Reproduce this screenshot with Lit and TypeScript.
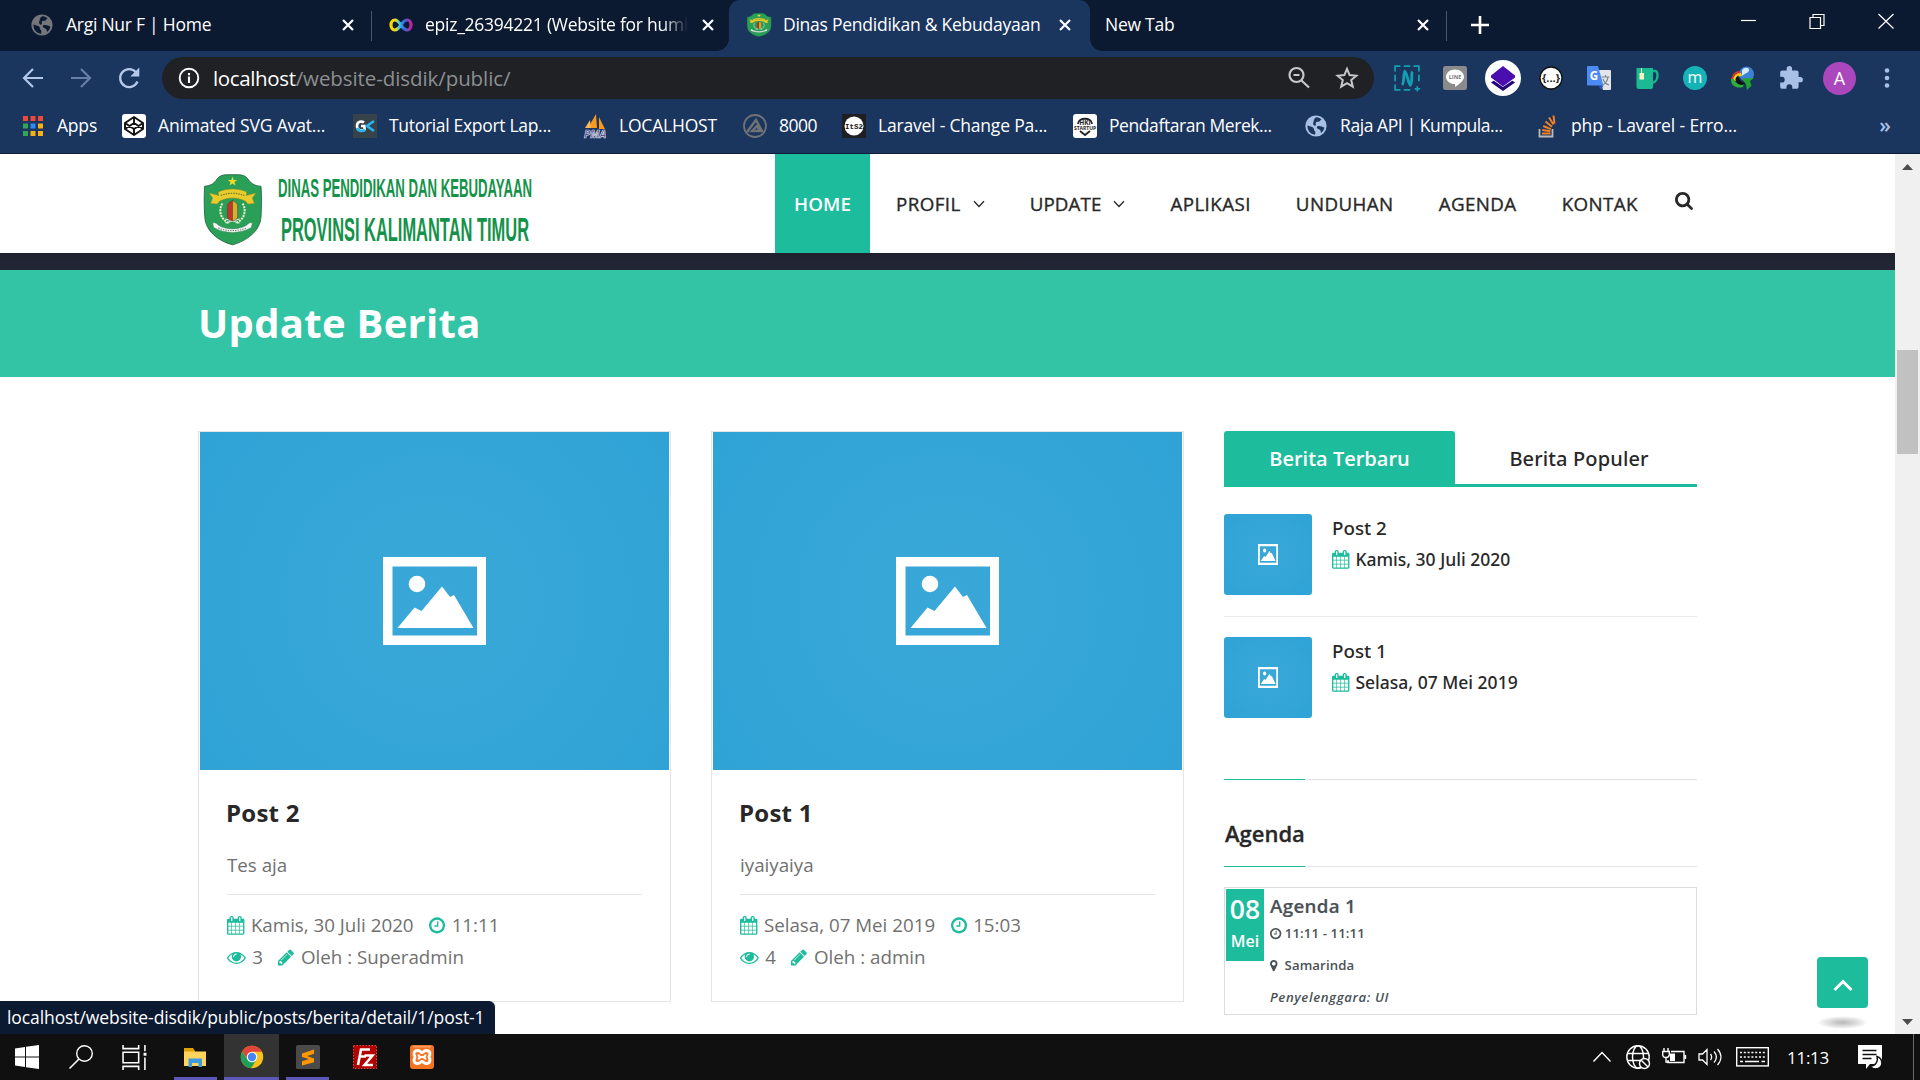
import { LitElement, html, svg, css } from "lit";
import { classMap } from "lit/directives/class-map.js";
import { styleMap } from "lit/directives/style-map.js";

/* ---------- Font Awesome style glyphs ---------- */
const fa: Record<string, { box: string; ratio: number; d: string }> = {
  calendar: { box: "64 0 1664 1792", ratio: 1664 / 1792, d: "M192 1664h288v-288h-288v288zm352 0h320v-288h-320v288zm-352-352h288v-320h-288v320zm352 0h320v-320h-320v320zm-352-384h288v-288h-288v288zm736 736h320v-288h-320v288zm-384-736h320v-288h-320v288zm768 736h288v-288h-288v288zm-384-352h320v-320h-320v320zm-352-864v-288q0-13-9.5-22.5t-22.5-9.5h-64q-13 0-22.5 9.5t-9.5 22.5v288q0 13 9.5 22.5t22.5 9.5h64q13 0 22.5-9.5t9.5-22.5zm736 864h288v-320h-288v320zm-384-384h320v-288h-320v288zm384 0h288v-288h-288v288zm32-480v-288q0-13-9.5-22.5t-22.5-9.5h-64q-13 0-22.5 9.5t-9.5 22.5v288q0 13 9.5 22.5t22.5 9.5h64q13 0 22.5-9.5t9.5-22.5zm384-64v1280q0 52-38 90t-90 38h-1408q-52 0-90-38t-38-90v-1280q0-52 38-90t90-38h128v-96q0-66 47-113t113-47h64q66 0 113 47t47 113v96h384v-96q0-66 47-113t113-47h64q66 0 113 47t47 113v96h128q52 0 90 38t38 90z" },
  clock: { box: "128 0 1536 1792", ratio: 1536 / 1792, d: "M1024 544v448q0 14-9 23t-23 9h-320q-14 0-23-9t-9-23v-64q0-14 9-23t23-9h224v-352q0-14 9-23t23-9h64q14 0 23 9t9 23zm416 352q0-148-73-273t-198-198-273-73-273 73-198 198-73 273 73 273 198 198 273 73 273-73 198-198 73-273zm224 0q0 209-103 385.5t-279.5 279.5-385.5 103-385.5-103-279.5-279.5-103-385.5 103-385.5 279.5-279.5 385.5-103 385.5 103 279.5 279.5 103 385.5z" },
  eye: { box: "0 0 1792 1792", ratio: 1, d: "M1664 960q-152-236-381-353 61 104 61 225 0 185-131.5 316.5t-316.5 131.5-316.5-131.5-131.5-316.5q0-121 61-225-229 117-381 353 133 205 333.5 326.5t434.5 121.5 434.5-121.5 333.5-326.5zm-720-384q0-20-14-34t-34-14q-125 0-214.5 89.5t-89.5 214.5q0 20 14 34t34 14 34-14 14-34q0-86 61-147t147-61q20 0 34-14t14-34zm848 384q0 34-20 69-140 230-376.5 368.5t-499.5 138.5-499.5-139-376.5-368q-20-35-20-69t20-69q140-229 376.5-368t499.5-139 499.5 139 376.5 368q20 35 20 69z" },
  pencil: { box: "128 0 1536 1792", ratio: 1536 / 1792, d: "M491 1536l91-91-235-235-91 91v107h128v128h107zm523-928q0-22-22-22-10 0-17 7l-542 542q-7 7-7 17 0 22 22 22 10 0 17-7l542-542q7-7 7-17zm-54-192l416 416-832 832h-416v-416zm683 96q0 53-37 90l-166 166-416-416 166-165q36-38 90-38 53 0 91 38l235 234q37 39 37 91z" },
  marker: { box: "384 0 1024 1792", ratio: 1024 / 1792, d: "M1152 640q0-106-75-181t-181-75-181 75-75 181 75 181 181 75 181-75 75-181zm256 0q0 109-33 179l-364 774q-16 33-47.5 52t-67.5 19-67.5-19-46.5-52l-365-774q-33-70-33-179 0-212 150-362t362-150 362 150 150 362z" },
  search: { box: "64 128 1664 1664", ratio: 1, d: "M1216 832q0-185-131.5-316.5t-316.5-131.5-316.5 131.5-131.5 316.5 131.5 316.5 316.5 131.5 316.5-131.5 131.5-316.5zm512 832q0 52-38 90t-90 38q-54 0-90-38l-343-342q-179 124-399 124-143 0-273.5-55.5t-225-150-150-225-55.5-273.5 55.5-273.5 150-225 225-150 273.5-55.5 273.5 55.5 225 150 150 225 55.5 273.5q0 220-124 399l343 343q37 37 37 90z" },
};
const faIcon = (name: string) => html`<svg class="fa" viewBox=${fa[name].box} style=${styleMap({ width: `${fa[name].ratio}em` })}><path fill="currentColor" d=${fa[name].d}></path></svg>`;

const icon = (size: number, body: unknown, box = 24) => html`<svg class="ico" width=${size} height=${size} viewBox="0 0 ${box} ${box}">${body}</svg>`;

/* ---------- Browser glyphs ---------- */
const globe = (color: string) => svg`
  <circle cx="12" cy="12" r="10.6" fill=${color}></circle>
  <path fill="var(--globe-cut)" d="M3.6 11.2c1.500 1.400 4 1 5.400 2.200 1.600 1.200.4 2.600 1.800 3.700 1 .8.500 2.900.200 3.600-5-.6-8.100-5-7.400-9.500zM12.500 3.200c2.300.3 3.900 1 5.200 2.400-1.500.2-1.200 1.600-2.400 2-1.300.4-2.300-.2-3.300.8-.8.9.4 2-.2 2.900-.8.8-2.300.2-2.600-1-.5-1.500.6-2.100.5-3.600 0-1.200 1.200-1.700 1-2.500zM13 12.600c1.600-1 3.500-.4 5.400.2 1.100.3 1.400.9 2 1-.5 2-1.700 4-3.400 5.200-.5-1.200 0-2.300-1-3-1.300-.9-3.700-1.300-3-3.400z"></path>`;

const crest = svg`
  <path fill="#2a9f57" stroke="#1d5f3d" stroke-width=".8" d="M22 .7h12c4 0 7 1.500 9 4 2.500 4 6 7.300 13 7.500.8 10 .6 20 0 31C55 57 42 67 28 70.800 14 67 1.500 57 .8 43.200 0 32 0 22 .6 12.200 7 12 10.500 8.700 13 4.700c2-2.500 5-4 9-4z"></path>
  <path fill="#f3dc2a" d="M28 2.800l1.200 3.200h3.400l-2.700 2.100 1 3.300-2.900-2-2.900 2 1-3.300L23.400 6h3.400z"></path>
  <path fill="#e8cc2e" stroke="#8c8b22" stroke-width=".5" d="M14 18c8-4 20-4 28 0l-.5 3.500L51 19l-3.500 5 2 5.500-6.500.5-2.500-3c-8-4-17-4-25 0L13 30l-6.500-.5 2-5.500L5 19l9.500 2.500z"></path>
  <path d="M16.500 21.500c7.500-3 15.500-3 23 0" stroke="#6d7a2a" stroke-width="1.200" stroke-dasharray="1.500 1" fill="none"></path>
  <path d="M18 29.500c-4 7-2 16 7 20M38 29.500c4 7 2 16-7 20" stroke="#eef2c8" stroke-width="2" stroke-dasharray="2 1" fill="none"></path>
  <path d="M21 49l14-4M35 49l-14-4" stroke="#e8efe6" stroke-width="1"></path>
  <path fill="#c2342d" stroke="#5b3a1c" stroke-width=".5" d="M28 26.500c-2.500 1-5 3-5 5V43c0 2 3 3.500 5 4z"></path>
  <path fill="#d9b02e" stroke="#5b3a1c" stroke-width=".5" d="M28 26.500c2.500 1 5 3 5 5V43c0 2-3 3.500-5 4z"></path>
  <path fill="#f5f7f4" stroke="#56806a" stroke-width=".5" d="M8.500 49c2.500-1 4 .5 6 2.500 8 4.500 19 4.500 27 0 2-2 3.500-3.500 6-2.500l-1 4.500c-11 6.500-26 6.500-37 0z"></path>
  <path d="M14 54c9 3.500 19 3.500 28 0" stroke="#6d8a79" stroke-width="1" stroke-dasharray="1.400 1" fill="none"></path>`;

const close = icon(14, svg`<path d="M2 2l10 10M12 2L2 12" stroke="#fff" stroke-width="2.200"></path>`, 14);

/* ---------- Data ---------- */
const tabs = [
  { cls: "t1", title: "Argi Nur F | Home", glyph: icon(24, globe("#73767b")) },
  { cls: "t2", title: "epiz_26394221 (Website for humb", glyph: icon(24, svg`<defs><linearGradient id="inf"><stop offset="0" stop-color="#ffd400"></stop><stop offset=".25" stop-color="#e8dc20"></stop><stop offset=".42" stop-color="#3fc1e8"></stop><stop offset=".65" stop-color="#2d6fe0"></stop><stop offset="1" stop-color="#c3229b"></stop></linearGradient></defs><path fill="none" stroke="url(#inf)" stroke-width="3.200" d="M12 12c-2.300-3.400-4-5-6.200-5C3.600 7 2 9.200 2 12s1.600 5 3.800 5c2.200 0 3.900-1.600 6.200-5s4-5 6.200-5C20.400 7 22 9.200 22 12s-1.600 5-3.800 5c-2.200 0-3.900-1.600-6.200-5z"></path>`) },
  { cls: "t3", title: "Dinas Pendidikan & Kebudayaan", glyph: html`<svg class="ico" width="24" height="24" viewBox="0 0 56 72" preserveAspectRatio="none">${crest}</svg>` },
  { cls: "t4", title: "New Tab", glyph: null },
];

const extensions = [
  icon(26, svg`<g fill="none" stroke="#11a0b2"><path stroke-width="1.600" d="M1 6V1h5M9 1h6M18 1h5v5M23 9v6M1 9v6M1 18v5h5M9 23h6M19 22h5M21.500 19.500v5"></path><path stroke-width="2.600" d="M7.500 18.500c2-2 1-10 2.500-12.500 2.500 2 2.500 10 5 12.500C17.500 16 15.500 8 17 6"></path></g>`),
  icon(24, svg`<rect width="24" height="24" rx="2.500" fill="#8b8b8b"></rect><path fill="#fff" d="M12 3.500c5 0 9 3.200 9 7.200 0 3.200-3.500 6.800-9 10.300.3-1.600.5-2.600-.4-2.900C6.800 17.700 3 14.700 3 10.700c0-4 4-7.200 9-7.200z"></path><text x="12" y="13" font-size="5.500" font-weight="700" text-anchor="middle" fill="#777">LINE</text>`),
  icon(36, svg`<circle cx="18" cy="18" r="18" fill="#fff"></circle><path fill="#22067a" d="M6 22.500L18 14l12 8.500L18 31z"></path><path fill="#fff" d="M4 17.500h28L18 27z"></path><path fill="#4a0db0" d="M6 15.500L18 6l12 9.500v2L18 26.500 6 17.500z"></path>`, 36),
  icon(24, svg`<circle cx="12" cy="12" r="11" fill="#fff" stroke="#111" stroke-width="1.300"></circle><text x="12" y="16" font-size="11" font-weight="700" text-anchor="middle" fill="#222">{...}</text>`),
  icon(24, svg`<path fill="#e3e5e8" d="M10 4h13a1 1 0 0 1 1 1v18a1 1 0 0 1-1 1h-7z"></path><path fill="#4c8bf5" d="M1 0h10l5.500 19.500H1a1 1 0 0 1-1-1V1a1 1 0 0 1 1-1z"></path><path fill="#2e57b8" d="M11.500 19.500h5L14 24z"></path><text x="7" y="14" font-size="11.500" font-weight="700" text-anchor="middle" fill="#fff">G</text><path d="M14.500 11h8M18.500 9v2M15.500 19c3-1.500 5-4 5.500-8M16 13c1 3 3 5 6 6" stroke="#7b8790" stroke-width="1.200" fill="none"></path>`),
  icon(24, svg`<path fill="none" stroke="#17b58c" stroke-width="2.400" d="M17 5h3c2 0 2.500 1.500 2.500 4.500S21 16.500 17 17"></path><path fill="#1cba92" d="M1.500 2H18v19a2 2 0 0 1-2 2H4a2.500 2.500 0 0 1-2.500-2.500z"></path><path d="M6.500 2v6" stroke="#e9f6a6" stroke-width="1"></path><rect x="4.500" y="7" width="4.500" height="6.500" fill="#f4f7c4"></rect>`),
  icon(24, svg`<circle cx="12" cy="12" r="12" fill="#15b3b6"></circle><text x="12" y="17" font-size="16" text-anchor="middle" fill="#fff">m</text>`),
  icon(24, svg`<circle cx="15.500" cy="8" r="7.500" fill="#3d82d6"></circle><path fill="#d8e9f7" d="M11 5c1-4 7-4 7-1s-4 3-7 6z"></path><path fill="#d5382a" d="M0 14c1-6 4-9 9-9l1 3c-4 0-6 3-6 7z"></path><path fill="#f2d21b" d="M2 14c1-4 3-7 8-7l1 3c-4 0-5 2-4 6z"></path><path fill="#2fae3c" d="M0 13c-.5 7 6 10 12 8l1-3c-5 1-9-1-10-5z"></path><path fill="#111" d="M4.500 14c0-2 1-4 3-4.500 0 5 3 7 7 8-4 3-9 1-10-3.500z"></path><path fill="#1fa52c" d="M11 12.500l12-.5-4 3 1.500 4.500-4.500 4.500-1-5.500z"></path>`),
  icon(26, svg`<path fill="#a9c0e6" d="M20.500 11H19V7a2 2 0 0 0-2-2h-4V3.500a2.500 2.500 0 0 0-5 0V5H4a2 2 0 0 0-2 2v3.800h1.500a2.700 2.700 0 0 1 0 5.400H2V20a2 2 0 0 0 2 2h3.800v-1.500a2.700 2.700 0 0 1 5.400 0V22H17a2 2 0 0 0 2-2v-4h1.500a2.500 2.500 0 0 0 0-5z"></path>`),
];

const bookmarks = [
  { w: 101, t: "Apps", ls: -0.2, g: icon(24, svg`${[0, 1, 2].map((r) => [0, 1, 2].map((c) => svg`<rect x=${2 + c * 7.5} y=${2 + r * 7.5} width="5" height="5" fill=${[["#ee4a3c", "#ee4a3c", "#ee4a3c"], ["#32a457", "#2c8af5", "#f8b015"], ["#32a457", "#f8b015", "#f8b015"]][r][c]}></rect>`))}`) },
  { w: 231, t: "Animated SVG Avat...", ls: -0.16, g: icon(24, svg`<rect width="24" height="24" rx="3" fill="#fff"></rect><path fill="none" stroke="#111" stroke-width="1.900" stroke-linejoin="round" d="M12 3l9 6v6l-9 6-9-6V9zM12 3v6M12 15v6M3 9l9 6 9-6M3 15l9-6 9 6"></path>`) },
  { w: 230, t: "Tutorial Export Lap...", ls: -0.31, g: icon(24, svg`<rect width="24" height="24" fill="#37434a"></rect><path fill="none" stroke="#fff" stroke-width="2.600" d="M11 8.500C9 7 4 7 4 12s5 5 7.500 3.500V12H8"></path><path fill="none" stroke="#28b4ee" stroke-width="2.600" d="M21 7l-7 5 7 5M4 14c1 3 5 3.500 8 2"></path>`) },
  { w: 160, t: "LOCALHOST", ls: -0.2, g: icon(24, svg`<path fill="#f79a1c" d="M13 0l1 14H5zM16 3l6 12h-6z"></path><path fill="#f9b75a" d="M7 6l1 8H2z"></path><text x="12" y="23.500" font-size="10.500" font-weight="700" font-style="italic" text-anchor="middle" fill="#2b2b6a" stroke="#dcdcee" stroke-width=".7">PMA</text>`) },
  { w: 99, t: "8000", ls: -0.5, g: icon(24, svg`<circle cx="12" cy="12" r="11" fill="none" stroke="#6f7277" stroke-width="1.800"></circle><path fill="none" stroke="#6f7277" stroke-width="2.400" d="M4 18L13 6l6 11H9l5-5 2 4"></path>`) },
  { w: 231, t: "Laravel - Change Pa...", ls: -0.2, g: icon(24, svg`<rect width="24" height="24" fill="#1f1f22"></rect><circle cx="12" cy="12" r="9.500" fill="#fff"></circle><text x="12" y="15" font-size="7.500" font-weight="700" text-anchor="middle" fill="#111" font-family="Liberation Mono, monospace">ItS2</text>`) },
  { w: 231, t: "Pendaftaran Merek...", ls: -0.42, g: icon(24, svg`<rect width="24" height="24" rx="3" fill="#fff"></rect><path d="M5 10c0-7 14-7 14 0M7 17l5 4 5-4" fill="none" stroke="#222" stroke-width="1.800"></path><text x="12" y="11" font-size="6.500" font-weight="700" text-anchor="middle" fill="#222">HKI</text><text x="12" y="16" font-size="5" font-weight="700" text-anchor="middle" fill="#222">STARTUP</text>`) },
  { w: 231, t: "Raja API | Kumpula...", ls: -0.42, g: icon(24, globe("#a9bfe4")) },
  { w: 231, t: "php - Lavarel - Erro...", ls: -0.12, g: icon(24, svg`<path d="M4.500 15v7.500h13V15" fill="none" stroke="#bcbbbb" stroke-width="1.800"></path><path d="M7 19.500h8.500M7.200 16l8.300 1.200M8.200 12l7.700 3.200M10.500 7.500l6.500 5.300M14 3.500l4.500 7M18.500 1.500l1 8" stroke="#f48024" stroke-width="2" fill="none"></path>`) },
];

const nav = [
  { t: "HOME", active: true }, { t: "PROFIL", sub: true }, { t: "UPDATE", sub: true, tight: true },
  { t: "APLIKASI" }, { t: "UNDUHAN" }, { t: "AGENDA" }, { t: "KONTAK" },
];

const posts = [
  { title: "Post 2", body: "Tes aja", date: "Kamis, 30 Juli 2020", time: "11:11", views: 3, author: "Superadmin" },
  { title: "Post 1", body: "iyaiyaiya", date: "Selasa, 07 Mei 2019", time: "15:03", views: 4, author: "admin" },
];

const placeholder = (cls: string) => html`<svg class=${cls} viewBox="0 0 103 88" preserveAspectRatio="none">
  <path fill="#fff" fill-rule="evenodd" d="M0 0h103v88H0zM9.500 9.500v69h84.500v-69z"></path><circle cx="34" cy="27" r="8.300" fill="#fff"></circle>
  <path fill="#fff" d="M14.500 71L31.500 50.500 38.500 54 59 29.500 67 40 71 38 90.500 71z"></path></svg>`;

/* ---------- Taskbar glyphs ---------- */
const gear = {
  win: icon(24, svg`<path fill="#fff" d="M0 3.400l10-1.400v9.500H0zM11 1.800L24 0v11.500H11zM0 12.500h10V22L0 20.600zM11 12.500h13V24l-13-1.800z"></path>`),
  search: icon(24, svg`<circle cx="15.500" cy="8.500" r="7.800" fill="none" stroke="#fff" stroke-width="1.400"></circle><path d="M10 14L.5 23.500" stroke="#fff" stroke-width="1.600"></path>`),
  view: icon(25, svg`<path fill="none" stroke="#fff" stroke-width="1.500" d="M1 0v3.500h15V0M1 7h15v10H1zM1 24v-3.500h15V24M22 0v6M22 12v12"></path><rect x="20.700" y="7.500" width="2.800" height="2.800" fill="#fff"></rect>`),
  folder: icon(24, svg`<path fill="#e0a106" d="M1 3h9l2 3v4H1z"></path><path fill="#ffd35c" d="M1 6.500h22V21H1z"></path><path fill="#3d9be0" d="M5.500 13.500h13.500V22h-3.500v-4h-6.500v4H5.500z"></path>`),
  chrome: icon(24, svg`<circle cx="12" cy="12" r="11.200" fill="#fbc116"></circle><path fill="#e2453a" d="M2.200 6.600A11.200 11.200 0 0 1 21.900 6.800H12L7.500 14.800z"></path><path fill="#1ea05a" d="M2.200 6.600A11.200 11.200 0 0 0 11 23.200L16.600 14.500H7.400z"></path><circle cx="12" cy="12" r="5.300" fill="#fff"></circle><circle cx="12" cy="12" r="4.200" fill="#4486f4"></circle>`),
  sublime: icon(24, svg`<rect width="24" height="24" rx="1.500" fill="#4a4a4a"></rect><path fill="#ff9800" d="M6 8.500L18 4.500v4.300l-7 2.300 7 2.300v3.800L6 20.500v-4.300l7-2.300-7-2z"></path>`),
  fz: icon(24, svg`<rect x=".5" y=".5" width="23" height="23" fill="#b50000" stroke="#e04a4a" stroke-dasharray="1.500 1.500"></rect><path fill="none" stroke="#fff" stroke-width="2.600" d="M5 20L8 4.500h9M6.500 11.500h6.500M11.500 10.500h8L11.500 20h8.500"></path>`),
  xampp: icon(24, svg`<rect width="24" height="24" rx="3" fill="#f37423"></rect><path d="M3 1.800h18" stroke="#f9b489" stroke-width="1"></path><path fill="none" stroke="#fff" stroke-width="2.800" stroke-linejoin="round" d="M8 5.500c-3 0-4 1.500-4 3.300 0 1.500 1 2.200 1 3.200s-1 1.700-1 3.200c0 1.800 1 3.300 4 3.300 2.500 0 2.500-2 4-2s1.500 2 4 2c3 0 4-1.500 4-3.300 0-1.500-1-2.200-1-3.200s1-1.700 1-3.200c0-1.800-1-3.300-4-3.300-2.500 0-2.500 2-4 2s-1.500-2-4-2z"></path><path fill="none" stroke="#fff" stroke-width="2" d="M8.500 9.500c0 2 1 2.500 3.500 2.500s3.500.5 3.500 2.500M15.500 9.500c0 2-1 2.500-3.500 2.500s-3.500.5-3.500 2.500"></path>`),
};

class AppRoot extends LitElement {
  static styles = css`
    :host { display: flex; flex-direction: column; width: 1920px; height: 1080px; overflow: hidden; position: relative; background: #fff; font-family: "Open Sans", "Noto Sans", sans-serif; --green: #1cbc9c; --ink: #282828; }
    * { box-sizing: border-box; }
    .ico { display: block; flex: none; overflow: visible; }
    .fa { height: 1em; vertical-align: -0.143em; overflow: visible; }
    .ui { font-size: 17.5px; letter-spacing: -0.25px; color: #fff; white-space: nowrap; }

    .tabs { display: flex; height: 51px; flex: none; background: #0b1931; --globe-cut: #0b1931; }
    .tab { display: flex; align-items: center; height: 51px; padding-bottom: 1px; position: relative; }
    .tab .label { flex: 1; margin-right: 12px; line-height: 48px; height: 50px; }
    .tab .ico + .label { margin-left: 12px; }
    .t1 { width: 372px; padding-left: 30px; padding-right: 17px; }
    .t2 { width: 357px; padding-left: 17px; padding-right: 16px; }
    .tab.t2 .label { width: 272px; flex: none; margin-right: 4px; -webkit-mask-image: linear-gradient(90deg, #000 238px, transparent 263px); mask-image: linear-gradient(90deg, #000 238px, transparent 263px); }
    .t3 { width: 361px; padding-left: 18px; padding-right: 18px; background: #1a355e; border-radius: 11px 11px 0 0; }
    .t3::before, .t3::after { content: ""; position: absolute; bottom: 0; width: 12px; height: 12px; }
    .t3::before { left: -12px; background: radial-gradient(circle at 0 0, transparent 11.5px, #1a355e 12px); }
    .t3::after { right: -12px; background: radial-gradient(circle at 100% 0, transparent 11.5px, #1a355e 12px); }
    .t4 { width: 357px; padding-left: 15px; padding-right: 17px; }
    .t1::after, .t4::after { content: ""; position: absolute; right: 0; top: 11px; width: 1px; height: 30px; background: #46556e; }
    .plus { margin: 15px 0 0 23px; }
    .win { margin-left: auto; display: flex; padding: 13px 26px 0 0; gap: 53px; }

    .toolbar { display: flex; align-items: center; height: 54px; flex: none; background: #1a355e; padding-left: 21px; }
    .toolbar .back { margin-right: 24px; }
    .toolbar .fwd { margin-right: 24px; opacity: .5; }
    .omni { display: flex; align-items: center; width: 1212px; height: 42px; margin-left: 21px; margin-right: 9px; border-radius: 21px; background: #202124; padding: 0 15px 0 16px; }
    .url { flex: 1; margin-left: 13px; font-size: 20.5px; line-height: 42px; letter-spacing: -0.08px; color: #8c8f93; white-space: nowrap; }
    .url b { font-weight: 400; color: #fff; letter-spacing: -0.36px; }
    .omni .star { margin-left: 24px; }
    .ext { width: 48px; display: flex; justify-content: center; }
    .me { width: 49px; display: flex; justify-content: center; }
    .me span { width: 33px; height: 33px; border-radius: 50%; background: #ab47bc; color: #fff; font-size: 18px; line-height: 33px; text-align: center; }
    .dots { width: 45px; display: flex; justify-content: center; }

    .marks { display: flex; align-items: center; height: 49px; flex: none; background: #1a355e; border-bottom: 1px solid #0d1d38; padding: 0 0 6px 21px; --globe-cut: #1a355e; }
    .mark { display: flex; gap: 12px; align-items: center; flex: none; }
    .mark .label { line-height: 40px; margin-top: -2px; }
    .more { margin-left: auto; padding-right: 29px; color: #a9c0e6; font-size: 21px; line-height: 36px; font-weight: 600; margin-top: -3px; }

    .view { display: flex; flex: none; height: 880px; }
    .page { width: 1895px; overflow: hidden; }
    .head { display: flex; height: 99px; padding-left: 204px; }
    .crest { margin-top: 20px; }
    .brand { margin: 16px 0 0 16px; }
    nav { display: flex; gap: 7px; margin-left: auto; width: 1120px; }
    .item { display: flex; align-items: center; gap: 12px; padding: 0 19px; font-size: 18.75px; letter-spacing: .42px; color: var(--ink); line-height: 99px; -webkit-text-stroke: .35px var(--ink); }
    .item.tight { letter-spacing: .1px; }
    .item.active { background: var(--green); color: #fff; font-weight: 600; letter-spacing: .1px; width: 95px; justify-content: center; -webkit-text-stroke: 0; }
    .find { font-size: 18px; color: var(--ink); margin: 38px 0 0 11px; }
    .find .fa { display: block; }
    .band { height: 17px; background: linear-gradient(#1f222e, #222533 60%); }
    .banner { height: 107px; background: #33c4a6; padding-left: 198px; color: #fff; font-weight: 700; font-size: 40px; line-height: 106px; letter-spacing: .3px; }

    .cols { display: grid; grid-template-columns: 473px 473px 473px; gap: 40px; padding: 54px 0 0 198px; align-items: start; }
    .card { border: 1px solid #e5e5e5; height: 571px; }
    .photo { display: flex; align-items: center; justify-content: center; width: 469px; height: 338px; margin-left: 1px; background: radial-gradient(circle, #39a8d8 0, #34a5d7 60%, #2fa3d6 100%); }
    .big { width: 103px; height: 88px; }
    .body { padding: 26px 28px 0; color: #707070; font-size: 18.75px; line-height: 32px; }
    .body h3 { margin: 0 0 19px -1px; font-size: 24px; line-height: 34px; font-weight: 700; color: var(--ink); letter-spacing: .25px; }
    .body p { margin: 0; }
    .rule { height: 1px; background: #e5e5e5; margin: 13px 0 14px; }
    .meta .fa { color: var(--green); margin-right: 1.6px; }
    .meta span { margin-right: 15.5px; }

    .switch { display: flex; height: 56px; border-bottom: 3px solid var(--green); font-size: 20px; line-height: 55px; text-align: center; color: var(--ink); }
    .switch .on { width: 231px; background: var(--green); color: #fff; font-weight: 600; border-radius: 3px 3px 0 0; height: 53px; }
    .switch .off { flex: 1; padding-left: 6px; font-family: "Noto Sans", "Open Sans", sans-serif; font-weight: 500; letter-spacing: .13px; }
    .recent { display: flex; gap: 20px; padding: 20px 0; border-bottom: 1px solid #ececec; color: var(--ink); font-family: "Noto Sans", "Open Sans", sans-serif; font-weight: 500; }
    .recent.first { padding: 27px 0 21px; }
    .recent.last { padding-bottom: 61px; border: 0; }
    .thumb { display: flex; align-items: center; justify-content: center; width: 88px; height: 81px; border-radius: 3px; background: radial-gradient(circle, #39a8d8 0, #2fa3d6 100%); }
    .small { width: 20px; height: 21px; }
    .rt { font-size: 18.75px; line-height: 28px; }
    .rd { font-size: 17.5px; line-height: 32px; margin-top: 1px; display: flex; align-items: center; gap: 6px; }
    .rd .fa { font-size: 18.75px; color: var(--green); }
    .split { height: 1px; background: linear-gradient(90deg, var(--green) 81px, #e2e2e2 81px); }
    .sub { margin: 38px 0 18px 1px; font-size: 22px; line-height: 30px; font-weight: 600; color: var(--ink); -webkit-text-stroke: .3px var(--ink); }
    .event { display: flex; margin-top: 20px; height: 128px; border: 1px solid #dcdcdc; padding: 1px; color: #4a5156; font-weight: 600; }
    .day { width: 38px; height: 72px; background: var(--green); color: #fff; text-align: center; padding-top: 2px; }
    .day b { display: block; font-weight: 600; font-size: 26.5px; line-height: 36px; }
    .day i { display: block; font-style: normal; font-weight: 600; font-size: 16px; line-height: 28px; }
    .info { margin-left: 6px; font-size: 13.2px; letter-spacing: .1px; }
    .info h4 { margin: 3px 0 0 0; font-size: 18.75px; line-height: 27px; font-weight: 600; letter-spacing: .3px; -webkit-text-stroke: .2px #4a5156; }
    .info div { line-height: 32px; white-space: pre; }
    .info .when { line-height: 28px; margin-bottom: 2px; }
    .info em { letter-spacing: .6px; }

    .scroll { width: 25px; background: #f0f0f0; display: flex; flex-direction: column; align-items: center; padding: 10px 0 9px; }
    .scroll .thumbbar { width: 21px; height: 104px; margin-top: 180px; background: #c1c1c1; }
    .scroll .down { margin-top: auto; }

    .top { position: absolute; left: 1817px; top: 957px; width: 51px; height: 51px; border-radius: 4px; background: var(--green); display: flex; align-items: center; justify-content: center; padding-top: 4px; }
    .shade { position: absolute; left: 1817px; top: 1016px; width: 51px; height: 13px; background: radial-gradient(ellipse closest-side, #b9b9b9, #e0e0e0 60%, #fff); }
    .status { position: absolute; left: 0; top: 1001px; width: 495px; height: 33px; border-radius: 0 6px 0 0; background: #0b1931; padding-left: 7px; line-height: 33px; letter-spacing: -0.09px; }

    .task { display: flex; height: 46px; flex: none; background: #101010; }
    .app { display: flex; justify-content: center; align-items: center; width: 57px; position: relative; }
    .app.w54 { width: 54px; } .app.w58 { width: 58px; } .app.w55 { width: 55px; } .app.w56 { width: 56px; }
    .app.shift { padding-right: 5px; }
    .app.on { background: #333; }
    .app.run::after { content: ""; position: absolute; bottom: 0; width: 43px; height: 3px; background: #5b58b8; }
    .app.on::after { width: 55px; }
    .tray { margin-left: auto; display: flex; align-items: center; }
    .slot { width: 36px; display: flex; justify-content: center; }
    .slot.kb { width: 48px; }
    .slot.note { width: 60px; }
    .clock { width: 64px; text-align: center; font-size: 17px; letter-spacing: -0.3px; color: #fff; }
    .edge { width: 1px; height: 46px; margin: 0 6px 0 13px; background: #6a6a6a; }
  `;

  private chrome() {
    return html`
      <div class="tabs">
        ${tabs.map((t) => html`<div class="tab ${t.cls}">${t.glyph}<span class="label ui">${t.title}</span>${close}</div>`)}
        <svg class="ico plus" width="20" height="20" viewBox="0 0 20 20"><path d="M10 1v18M1 10h18" stroke="#fff" stroke-width="2.600"></path></svg>
        <div class="win">
          ${icon(16, svg`<path d="M1 7.500h15" stroke="#fff" stroke-width="1.200"></path>`, 16)}
          ${icon(16, svg`<path d="M1 4.500h10.500V15.500H1zM4 4.500V1.500H15V12.500H11.500" fill="none" stroke="#fff" stroke-width="1.200"></path>`, 16)}
          ${icon(16, svg`<path d="M.5 1l15 14.500M15.500 1L.5 15.500" stroke="#fff" stroke-width="1.200"></path>`, 16)}
        </div>
      </div>
      <div class="toolbar">
        <span class="back">${icon(24, svg`<path d="M22 12H3.500M12 3L3 12l9 9" fill="none" stroke="#b4c8ea" stroke-width="2.200"></path>`)}</span>
        <span class="fwd">${icon(24, svg`<path d="M2 12h18.500M12 3l9 9-9 9" fill="none" stroke="#b4c8ea" stroke-width="2.200"></path>`)}</span>
        ${icon(24, svg`<path d="M20.500 15.500A9 9 0 1 1 19 6.200" fill="none" stroke="#b4c8ea" stroke-width="2.300"></path><path fill="#b4c8ea" d="M22.300 1.500v9h-9z"></path>`)}
        <div class="omni">
          ${icon(22, svg`<circle cx="11" cy="11" r="9.300" fill="none" stroke="#fff" stroke-width="1.900"></circle><path d="M11 9.500v6.500M11 6v2.300" stroke="#fff" stroke-width="2.100"></path>`, 22)}
          <span class="url"><b>localhost</b>/website-disdik/public/</span>
          ${icon(24, svg`<circle cx="9.500" cy="9" r="7" fill="none" stroke="#c4c7cb" stroke-width="2.200"></circle><path d="M6.500 9h6M14.500 14.500l7.500 7" stroke="#c4c7cb" stroke-width="2.200"></path>`)}
          <span class="star">${icon(24, svg`<path d="M12 2.800l2.600 6.300 6.800.6-5.200 4.400 1.600 6.600L12 17.200l-5.800 3.500 1.600-6.600-5.200-4.400 6.800-.6z" fill="none" stroke="#c4c7cb" stroke-width="2"></path>`)}</span>
        </div>
        ${extensions.map((e) => html`<span class="ext">${e}</span>`)}
        <span class="me"><span>A</span></span>
        <span class="dots">${icon(24, svg`<g fill="#a9c0e6"><circle cx="12" cy="4.500" r="2.300"></circle><circle cx="12" cy="12" r="2.300"></circle><circle cx="12" cy="19.500" r="2.300"></circle></g>`)}</span>
      </div>
      <div class="marks">
        ${bookmarks.map((b) => html`<div class="mark" style=${styleMap({ width: `${b.w}px` })}>${b.g}<span class="label ui" style=${styleMap({ letterSpacing: `${b.ls}px` })}>${b.t}</span></div>`)}
        <span class="more">»</span>
      </div>`;
  }

  private card(p: (typeof posts)[number]) {
    return html`<article class="card">
      <div class="photo">${placeholder("big")}</div>
      <div class="body">
        <h3>${p.title}</h3>
        <p>${p.body}</p>
        <div class="rule"></div>
        <div class="meta"><span>${faIcon("calendar")} ${p.date}</span>${faIcon("clock")} ${p.time}</div>
        <div class="meta"><span>${faIcon("eye")} ${p.views}</span>${faIcon("pencil")} Oleh : ${p.author}</div>
      </div>
    </article>`;
  }

  private page() {
    return html`<div class="page">
      <header class="head">
        <svg class="ico crest" width="57" height="72" viewBox="0 0 56 72" preserveAspectRatio="none">${crest}</svg>
        <svg class="ico brand" width="256" height="76" viewBox="0 0 256 76" font-family="Liberation Sans, Arial, sans-serif" font-weight="700" fill="#14924a">
          <text x="1" y="27" font-size="26.500" textLength="254" lengthAdjust="spacingAndGlyphs">DINAS PENDIDIKAN DAN KEBUDAYAAN</text>
          <text x="4" y="70.500" font-size="34" textLength="248" lengthAdjust="spacingAndGlyphs">PROVINSI KALIMANTAN TIMUR</text>
        </svg>
        <nav>
          ${nav.map((n) => html`<div class=${classMap({ item: true, active: !!n.active, tight: !!n.tight })}>${n.t}${n.sub ? html`<svg class="ico" width="12" height="10" viewBox="0 0 12 10"><path d="M1 2.200l5 5.300 5-5.300" fill="none" stroke="#282828" stroke-width="1.300"></path></svg>` : null}</div>`)}
          <div class="find">${faIcon("search")}</div>
        </nav>
      </header>
      <div class="band"></div>
      <div class="banner">Update Berita</div>
      <main class="cols">
        ${posts.map((p) => this.card(p))}
        <aside>
          <div class="switch"><div class="on">Berita Terbaru</div><div class="off">Berita Populer</div></div>
          ${posts.map((p, i) => html`<div class=${classMap({ recent: true, first: i === 0, last: i === posts.length - 1 })}>
            <div class="thumb">${placeholder("small")}</div>
            <div><div class="rt">${p.title}</div><div class="rd">${faIcon("calendar")}<span>${p.date}</span></div></div>
          </div>`)}
          <div class="split"></div>
          <div class="sub">Agenda</div>
          <div class="split"></div>
          <div class="event">
            <div class="day"><b>08</b><i>Mei</i></div>
            <div class="info">
              <h4>Agenda 1</h4>
              <div class="when">${faIcon("clock")} 11:11 - 11:11</div>
              <div>${faIcon("marker")}  Samarinda</div>
              <div><em>Penyelenggara: UI</em></div>
            </div>
          </div>
        </aside>
      </main>
    </div>`;
  }

  private taskbar() {
    return html`<div class="task">
      <div class="app w54">${gear.win}</div>
      <div class="app w54">${gear.search}</div>
      <div class="app w58 shift">${gear.view}</div>
      <div class="app w58 run">${gear.folder}</div>
      <div class="app w55 run on">${gear.chrome}</div>
      <div class="app run">${gear.sublime}</div>
      <div class="app w58">${gear.fz}</div>
      <div class="app w56">${gear.xampp}</div>
      <div class="tray">
        <span class="slot">${icon(20, svg`<path d="M1.500 14.500L10 5.500l8.500 9" fill="none" stroke="#fff" stroke-width="1.400"></path>`, 20)}</span>
        <span class="slot">${icon(24, svg`<g fill="none" stroke="#fff" stroke-width="1.400"><circle cx="12" cy="12" r="11.200"></circle><ellipse cx="12" cy="12" rx="5.500" ry="11.200"></ellipse><path d="M1 8.500h22M1 15.500h15"></path><circle cx="18.500" cy="18.500" r="5" fill="#101010"></circle><path d="M15 15l7 7"></path></g>`)}</span>
        <span class="slot">${icon(24, svg`<g fill="none" stroke="#fff" stroke-width="1.400"><path d="M9 6.500h13v11H6V15M23.500 10v4M2 3v3M6 3v3M.7 6.500h6.600v3c0 2-1.300 3-3.300 3s-3.300-1-3.300-3zM4 12.500V17h3"></path></g><path fill="#fff" d="M8 8.500h5v7.500H8z"></path>`)}</span>
        <span class="slot">${icon(24, svg`<g fill="none" stroke="#fff" stroke-width="1.300"><path d="M1 9h3.500L9 4.500v15L4.500 15H1zM12.500 9c1.500 2 1.500 4 0 6M16 6.500c3 3.500 3 7.500 0 11M19.500 4c4.500 5 4.500 11 0 16"></path></g>`)}</span>
        <span class="slot kb"><svg class="ico" width="33" height="20" viewBox="0 0 33 20"><rect x=".7" y=".7" width="31.600" height="18.200" fill="none" stroke="#fff" stroke-width="1.400"></rect><path d="M4 5.500h25M4 10h25" stroke="#fff" stroke-width="1.600" stroke-dasharray="2 1.800"></path><path d="M4 14.500h3M9 14.500h14M25.500 14.500h3.500" stroke="#fff" stroke-width="1.600"></path></svg></span>
        <span class="clock">11:13</span>
        <span class="slot note">${icon(24, svg`<path fill="#fff" d="M0 0h24v19H12l-4 5v-5H0z"></path><path d="M4.500 5.500h14M4.500 9.500h14M4.500 13.500h9" stroke="#101010" stroke-width="1.500"></path><path fill="#fff" stroke="#101010" stroke-width="1.400" d="M19 11.500c6 2 6.500 10 1 12-3 1-6 0-7.500-2.500 5 0 8-4.500 6.500-9.500z"></path>`)}</span>
        <span class="edge"></span>
      </div>
    </div>`;
  }

  render() {
    return html`
      ${this.chrome()}
      <div class="view">
        ${this.page()}
        <div class="scroll">
          <svg class="ico" width="11" height="6" viewBox="0 0 11 6"><path fill="#4d4d4d" d="M5.500 0L11 6H0z"></path></svg>
          <div class="thumbbar"></div>
          <svg class="ico down" width="11" height="6" viewBox="0 0 11 6"><path fill="#4d4d4d" d="M5.500 6L11 0H0z"></path></svg>
        </div>
      </div>
      ${this.taskbar()}
      <div class="top"><svg class="ico" width="22" height="14" viewBox="0 0 22 14"><path d="M2.500 12L11 3.500 19.500 12" fill="none" stroke="#fff" stroke-width="3"></path></svg></div>
      <div class="shade"></div>
      <div class="status ui">localhost/website-disdik/public/posts/berita/detail/1/post-1</div>`;
  }
}
customElements.define("app-root", AppRoot);
